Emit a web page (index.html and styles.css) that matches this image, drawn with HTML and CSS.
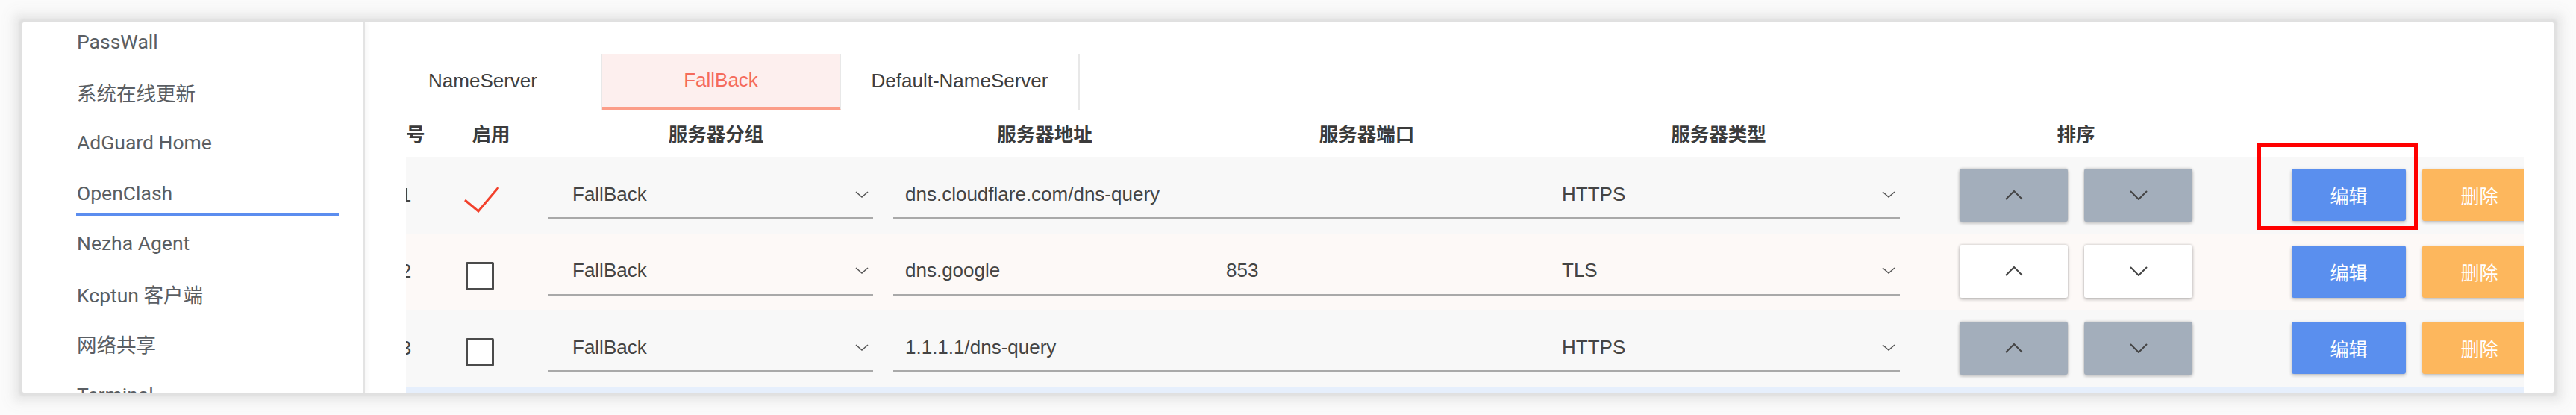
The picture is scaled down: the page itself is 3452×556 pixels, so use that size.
FILE: index.html
```html
<!DOCTYPE html>
<html lang="zh-CN">
<head>
<meta charset="utf-8">
<title>OpenClash</title>
<link rel="stylesheet" href="styles.css">
</head>
<body>
<div class="card">
  <aside class="sidebar">
    <ul class="nav">
      <li class="nav-item">PassWall</li>
      <li class="nav-item">系统在线更新</li>
      <li class="nav-item">AdGuard Home</li>
      <li class="nav-item active">OpenClash</li>
      <li class="nav-item">Nezha Agent</li>
      <li class="nav-item">Kcptun 客户端</li>
      <li class="nav-item">网络共享</li>
      <li class="nav-item">Terminal</li>
    </ul>
  </aside>
  <main class="main">
    <div class="tabs">
      <div class="tab first">NameServer</div>
      <div class="tab active">FallBack</div>
      <div class="tab">Default-NameServer</div>
    </div>
    <div class="table-wrap">
      <div class="table">
        <div class="row head">
          <div class="cell c-seq">序号</div>
          <div class="cell c-en">启用</div>
          <div class="cell c-group">服务器分组</div>
          <div class="cell c-addr">服务器地址</div>
          <div class="cell c-port">服务器端口</div>
          <div class="cell c-type">服务器类型</div>
          <div class="cell c-sort">排序</div>
          <div class="cell c-act"></div>
        </div>

        <div class="row odd">
          <div class="cell c-seq">1</div>
          <div class="cell c-en">
            <svg class="check" width="48" height="36" viewBox="0 0 48 36"><polyline points="2,19 20,34 47,2" fill="none" stroke="#f2412c" stroke-width="3"/></svg>
          </div>
          <div class="cell c-group"><div class="select"><span>FallBack</span><svg class="chev" width="18" height="9" viewBox="0 0 18 9"><polyline points="1,1 9,8 17,1" fill="none" stroke="#555" stroke-width="1.5"/></svg></div></div>
          <div class="cell c-addr"><div class="field">dns.cloudflare.com/dns-query</div></div>
          <div class="cell c-port"><div class="field port"></div></div>
          <div class="cell c-type"><div class="select"><span>HTTPS</span><svg class="chev" width="18" height="9" viewBox="0 0 18 9"><polyline points="1,1 9,8 17,1" fill="none" stroke="#555" stroke-width="1.5"/></svg></div></div>
          <div class="cell c-sort">
            <button class="sort grey"><svg width="24" height="13" viewBox="0 0 24 13"><polyline points="1,12 12,1 23,12" fill="none" stroke="#444" stroke-width="2"/></svg></button>
            <button class="sort grey"><svg width="24" height="13" viewBox="0 0 24 13"><polyline points="1,1 12,12 23,1" fill="none" stroke="#444" stroke-width="2"/></svg></button>
          </div>
          <div class="cell c-act">
            <button class="btn edit">编辑</button>
            <button class="btn del">删除</button>
            <div class="mark"></div>
          </div>
        </div>

        <div class="row even">
          <div class="cell c-seq">2</div>
          <div class="cell c-en"><span class="box"></span></div>
          <div class="cell c-group"><div class="select"><span>FallBack</span><svg class="chev" width="18" height="9" viewBox="0 0 18 9"><polyline points="1,1 9,8 17,1" fill="none" stroke="#555" stroke-width="1.5"/></svg></div></div>
          <div class="cell c-addr"><div class="field">dns.google</div></div>
          <div class="cell c-port"><div class="field port">853</div></div>
          <div class="cell c-type"><div class="select"><span>TLS</span><svg class="chev" width="18" height="9" viewBox="0 0 18 9"><polyline points="1,1 9,8 17,1" fill="none" stroke="#555" stroke-width="1.5"/></svg></div></div>
          <div class="cell c-sort">
            <button class="sort white"><svg width="24" height="13" viewBox="0 0 24 13"><polyline points="1,12 12,1 23,12" fill="none" stroke="#444" stroke-width="2"/></svg></button>
            <button class="sort white"><svg width="24" height="13" viewBox="0 0 24 13"><polyline points="1,1 12,12 23,1" fill="none" stroke="#444" stroke-width="2"/></svg></button>
          </div>
          <div class="cell c-act">
            <button class="btn edit">编辑</button>
            <button class="btn del">删除</button>
          </div>
        </div>

        <div class="row odd">
          <div class="cell c-seq">3</div>
          <div class="cell c-en"><span class="box"></span></div>
          <div class="cell c-group"><div class="select"><span>FallBack</span><svg class="chev" width="18" height="9" viewBox="0 0 18 9"><polyline points="1,1 9,8 17,1" fill="none" stroke="#555" stroke-width="1.5"/></svg></div></div>
          <div class="cell c-addr"><div class="field">1.1.1.1/dns-query</div></div>
          <div class="cell c-port"><div class="field port"></div></div>
          <div class="cell c-type"><div class="select"><span>HTTPS</span><svg class="chev" width="18" height="9" viewBox="0 0 18 9"><polyline points="1,1 9,8 17,1" fill="none" stroke="#555" stroke-width="1.5"/></svg></div></div>
          <div class="cell c-sort">
            <button class="sort grey"><svg width="24" height="13" viewBox="0 0 24 13"><polyline points="1,12 12,1 23,12" fill="none" stroke="#444" stroke-width="2"/></svg></button>
            <button class="sort grey"><svg width="24" height="13" viewBox="0 0 24 13"><polyline points="1,1 12,12 23,1" fill="none" stroke="#444" stroke-width="2"/></svg></button>
          </div>
          <div class="cell c-act">
            <button class="btn edit">编辑</button>
            <button class="btn del">删除</button>
          </div>
        </div>

        <div class="row next"></div>
      </div>
    </div>
  </main>
</div>
</body>
</html>
```

FILE: styles.css
```css
* { box-sizing: border-box; }

html, body {
  margin: 0;
  padding: 0;
  background: #fbfbfb;
}

body {
  width: 3452px;
  height: 556px;
  padding: 30px;
  overflow: hidden;
  font-family: "Liberation Sans", Arial, "Noto Sans CJK SC", sans-serif;
  color: #434343;
}

.card {
  width: 3392px;
  height: 496px;
  background: #fff;
  display: flex;
  overflow: hidden;
  box-shadow: 0 0 3px 5px #e0e0e0, 0 0 10px 11px #ebebeb, 0 0 18px 17px #f4f4f4;
  border-radius: 2px;
}

/* ---------- sidebar ---------- */
.sidebar {
  width: 459px;
  flex: none;
  border-right: 2px solid #e3e3e3;
  box-shadow: 4px 0 5px rgba(0, 0, 0, 0.03);
  overflow: hidden;
  position: relative;
  z-index: 1;
}

.nav {
  list-style: none;
  margin: -8px 0 0 0;
  padding: 0;
}

.nav-item {
  margin-left: 72px;
  width: 352px;
  height: 67.5px;
  display: flex;
  align-items: center;
  padding-left: 1px;
  font-family: Roboto, "Noto Sans CJK SC", sans-serif;
  font-size: 26.5px;
  color: #5a5e63;
}

.nav-item.active {
  background-image: linear-gradient(#5b8def, #5b8def);
  background-size: 100% 4px;
  background-repeat: no-repeat;
  background-position: 0 calc(100% - 3.5px);
}

/* ---------- main ---------- */
.main {
  flex: 1;
  min-width: 0;
  padding-top: 42px;
}

.tabs {
  display: flex;
  height: 76px;
}

.tab {
  width: 320px;
  height: 76px;
  display: flex;
  align-items: center;
  justify-content: center;
  padding-bottom: 4px;
  border-right: 2px solid #e8e8e8;
  font-size: 26px;
  color: #3e3e3e;
}

.tab.first { width: 318px; }

.tab.active {
  background: #fdefee;
  color: #f56b5c;
  border-bottom: 5px solid #fc9d88;
  padding-bottom: 0;
}

.table-wrap {
  margin-left: 55px;
  margin-right: 40px;
  overflow: hidden;
}

.table {
  margin-left: -50px;
  width: 2944px;
}

.row {
  display: grid;
  grid-template-columns: 100px 128px 475px 406px 457px 486px 472px 420px;
  align-items: center;
  height: 102.5px;
}

.row.head {
  height: 62px;
  padding-bottom: 4px;
  background: #fff;
}

.row.odd { background: #f8f8f8; }
.row.even { background: #fdf9f7; }
.row.next { background: #e6effc; height: 60px; }

.cell {
  display: flex;
  align-items: center;
  height: 100%;
  font-size: 26px;
}

.head .cell {
  justify-content: center;
  font-family: "Noto Sans CJK SC", sans-serif;
  font-weight: 700;
  font-size: 25.5px;
  color: #3b3b3b;
}

.c-seq { justify-content: center; }

.row:not(.head) .c-en {
  padding-left: 27px;
}

.check {
  margin-top: 11px;
  flex: none;
}

.box {
  width: 38px;
  height: 38px;
  margin-left: 3px;
  margin-top: 12px;
  border: 3px solid #4b4b4b;
  border-radius: 2px;
  background: #fff;
}

.row:not(.head) .c-group {
  padding: 0 27px 0 12px;
}

.select {
  width: 100%;
  height: 64px;
  display: flex;
  align-items: center;
  justify-content: space-between;
  padding: 0 6px 0 33px;
  border-bottom: 2px solid #a9a9a9;
  color: #444;
}

.field {
  width: 100%;
  height: 64px;
  display: flex;
  align-items: center;
  padding-left: 16px;
  border-bottom: 2px solid #a9a9a9;
  color: #444;
}

.field.port { padding-left: 40px; }

.chev { flex: none; }

.c-sort {
  justify-content: center;
  gap: 22px;
}

.sort {
  width: 145px;
  height: 71px;
  border: none;
  border-radius: 3px;
  display: flex;
  align-items: center;
  justify-content: center;
  box-shadow: 0 2px 4px rgba(0, 0, 0, 0.28), 0 -1px 3px rgba(0, 0, 0, 0.1);
  padding: 0;
}

.sort.grey { background: #a3aebb; }
.sort.white { background: #fff; }

.c-act {
  padding-left: 53px;
  gap: 22px;
  position: relative;
}

.btn {
  width: 153px;
  height: 70px;
  flex: none;
  border: none;
  border-radius: 3px;
  color: #fff;
  font-family: "Noto Sans CJK SC", sans-serif;
  font-size: 25px;
  box-shadow: 0 2px 4px rgba(0, 0, 0, 0.25);
  padding: 0;
}

.btn.edit { background: #5a8fee; }
.btn.del { background: #fdb75d; }

.mark {
  position: absolute;
  left: 7px;
  top: -18px;
  width: 215px;
  height: 116px;
  border: 5px solid #ff0000;
}
```
